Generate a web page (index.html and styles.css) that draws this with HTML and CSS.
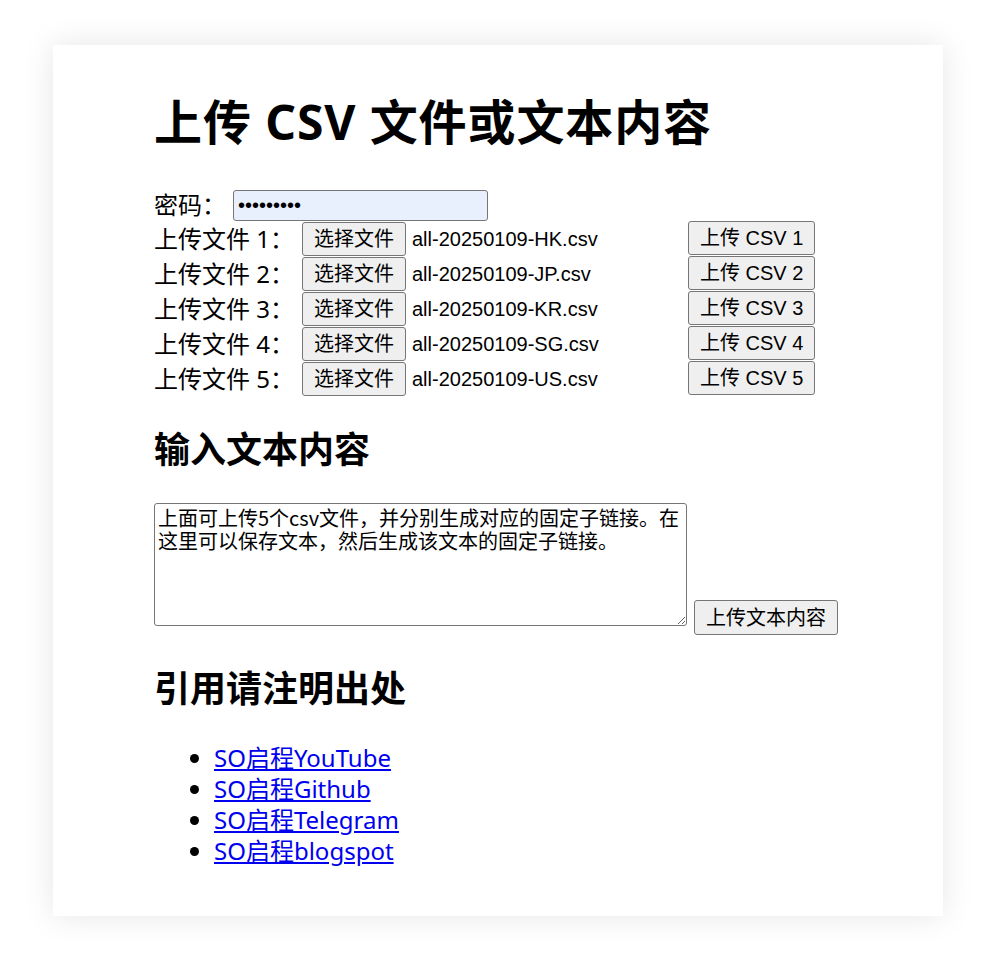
FILE: index.html
```html
<!DOCTYPE html>
<html lang="zh-CN">
<head>
<meta charset="utf-8">
<title>上传 CSV 文件或文本内容</title>
<link rel="stylesheet" href="styles.css">
</head>
<body>
<div class="card">
  <h1 class="title">上传 CSV 文件或文本内容</h1>

  <div class="row row-pass">
    <label class="lbl lbl-pass" for="pw">密码：</label>
    <input class="pass" id="pw" type="password" value="123456789">
  </div>

  <div class="row row-file">
    <span class="lbl lbl-file">上传文件 1：</span>
    <label class="file"><input type="file" class="file-real"><span class="btn file-btn">选择文件</span><span class="file-name">all-20250109-HK.csv</span></label>
    <button class="btn" type="button">上传 CSV 1</button>
  </div>
  <div class="row row-file">
    <span class="lbl lbl-file">上传文件 2：</span>
    <label class="file"><input type="file" class="file-real"><span class="btn file-btn">选择文件</span><span class="file-name">all-20250109-JP.csv</span></label>
    <button class="btn" type="button">上传 CSV 2</button>
  </div>
  <div class="row row-file">
    <span class="lbl lbl-file">上传文件 3：</span>
    <label class="file"><input type="file" class="file-real"><span class="btn file-btn">选择文件</span><span class="file-name">all-20250109-KR.csv</span></label>
    <button class="btn" type="button">上传 CSV 3</button>
  </div>
  <div class="row row-file">
    <span class="lbl lbl-file">上传文件 4：</span>
    <label class="file"><input type="file" class="file-real"><span class="btn file-btn">选择文件</span><span class="file-name">all-20250109-SG.csv</span></label>
    <button class="btn" type="button">上传 CSV 4</button>
  </div>
  <div class="row row-file">
    <span class="lbl lbl-file">上传文件 5：</span>
    <label class="file"><input type="file" class="file-real"><span class="btn file-btn">选择文件</span><span class="file-name">all-20250109-US.csv</span></label>
    <button class="btn" type="button">上传 CSV 5</button>
  </div>

  <h2 class="sub sub-first">输入文本内容</h2>
  <div class="text-row">
    <textarea class="text">上面可上传5个csv文件，并分别生成对应的固定子链接。在这里可以保存文本，然后生成该文本的固定子链接。</textarea>
    <button class="btn btn-text" type="button">上传文本内容</button>
  </div>

  <h2 class="sub">引用请注明出处</h2>
  <ul class="links">
    <li><a href="#">SO启程YouTube</a></li>
    <li><a href="#">SO启程Github</a></li>
    <li><a href="#">SO启程Telegram</a></li>
    <li><a href="#">SO启程blogspot</a></li>
  </ul>
</div>
</body>
</html>
```
FILE: styles.css
```css
html, body {
  margin: 0;
  padding: 0;
  background: #ffffff;
}

body {
  font-family: "Noto Sans", "Noto Sans CJK SC", sans-serif;
  font-size: 24px;
  color: #000000;
}

.card {
  width: 890px;
  box-sizing: border-box;
  margin: 45px auto 44px;
  padding: 45px 100px 50px 101px;
  background: #ffffff;
  box-shadow: 0 0 30px rgba(0, 0, 0, 0.1);
}

.title {
  margin: 0;
  font-size: 48px;
  line-height: 64px;
  font-weight: 700;
  letter-spacing: 0.9px;
}

.row {
  display: flex;
  align-items: center;
}

.row-pass {
  margin-top: 35px;
  height: 32px;
}

.row-file {
  height: 35px;
}

.lbl {
  flex: none;
  white-space: nowrap;
  line-height: 30px;
}

.lbl-pass {
  width: 79px;
}

.lbl-file {
  width: 148px;
}

.pass {
  box-sizing: border-box;
  width: 255px;
  height: 31px;
  margin: 0;
  padding: 0 4px;
  border: 1px solid #767676;
  border-radius: 3px;
  background: #e8f0fe;
  font-family: "Liberation Sans", sans-serif;
  font-size: 20px;
  color: #000000;
  outline: none;
}

.btn {
  box-sizing: border-box;
  display: inline-flex;
  align-items: center;
  justify-content: center;
  height: 34px;
  margin: 0;
  padding: 0 11px;
  border: 1px solid #767676;
  border-radius: 3px;
  background: #efefef;
  font-family: "Liberation Sans", "Noto Sans CJK SC", sans-serif;
  font-size: 20px;
  line-height: 22px;
  color: #000000;
  white-space: nowrap;
}

.row-file .btn {
  align-self: flex-start;
}

.file {
  display: flex;
  align-items: flex-start;
  width: 386px;
  flex: none;
}

.file-real {
  display: none;
}

.file-btn {
  flex: none;
}

.file-name {
  margin-left: 6px;
  font-family: "Liberation Sans", sans-serif;
  font-size: 20px;
  line-height: 34px;
  white-space: nowrap;
}

.sub {
  margin: 30px 0 0;
  font-size: 36px;
  line-height: 48px;
  font-weight: 700;
}

.text-row {
  display: flex;
  gap: 7px;
  height: 132px;
  margin-top: 29px;
}

.text {
  box-sizing: border-box;
  align-self: flex-start;
  width: 533px;
  height: 123px;
  margin: 0;
  padding: 2px 3px;
  border: 1px solid #767676;
  border-radius: 3px;
  font-family: "Noto Sans CJK SC", monospace;
  font-size: 20px;
  line-height: 23px;
  color: #000000;
  background: #ffffff;
}

.btn-text {
  align-self: flex-end;
  height: 35px;
}

.links {
  margin: 29px 0 0;
  padding-left: 60px;
  list-style: disc;
}

.links li {
  line-height: 31px;
}

.links a {
  color: #0000ee;
  text-decoration: underline;
}
```
